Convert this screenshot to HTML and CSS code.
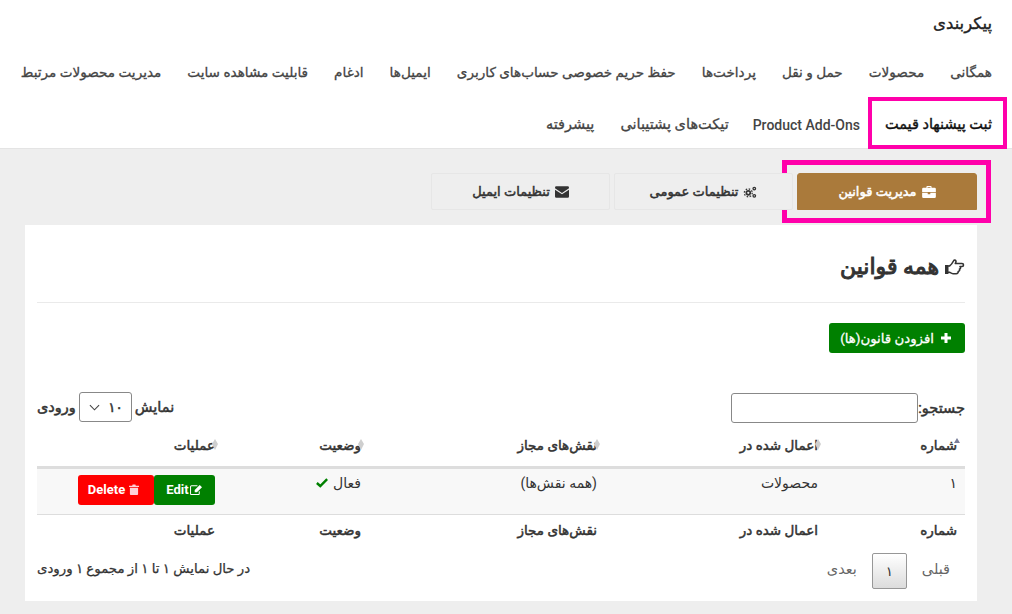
FILE: index.html
```html
<!DOCTYPE html>
<html lang="fa" dir="rtl">
<head>
<meta charset="utf-8">
<title>پیکربندی</title>
<link rel="stylesheet" href="styles.css">
</head>
<body>
<header class="top">
  <h1 class="page-title">پیکربندی</h1>
  <nav class="tabs">
    <a class="tab">همگانی</a>
    <a class="tab">محصولات</a>
    <a class="tab">حمل و نقل</a>
    <a class="tab">پرداخت‌ها</a>
    <a class="tab">حفظ حریم خصوصی حساب‌های کاربری</a>
    <a class="tab">ایمیل‌ها</a>
    <a class="tab">ادغام</a>
    <a class="tab">قابلیت مشاهده سایت</a>
    <a class="tab">مدیریت محصولات مرتبط</a>
    <a class="tab tab-active">ثبت پیشنهاد قیمت</a>
    <a class="tab tab-latin">Product Add-Ons</a>
    <a class="tab tab-wide">تیکت‌های پشتیبانی</a>
    <a class="tab tab-wide">پیشرفته</a>
  </nav>
</header>
<main class="content">
  <div class="subtabs">
    <a class="subtab subtab-active">
      <svg class="ic" viewBox="0 0 16 14"><path fill="currentColor" d="M5 2V1a1 1 0 0 1 1-1h4a1 1 0 0 1 1 1v1h3.500A1.500 1.500 0 0 1 16 3.500V7H0V3.500A1.500 1.500 0 0 1 1.500 2zm1.300 0h3.400V1.300H6.300zM0 8h6.500v1.500h3V8H16v4.500a1.500 1.500 0 0 1-1.500 1.500h-13A1.500 1.500 0 0 1 0 12.500z"/></svg>
      مدیریت قوانین
    </a>
    <a class="subtab">
      <svg class="ic" viewBox="0 0 16 14"><g fill="none" stroke="currentColor"><circle cx="6" cy="8" r="2.300" stroke-width="2"/><circle cx="6" cy="8" r="4.600" stroke-width="1.500" stroke-dasharray="1.800 1.800"/><circle cx="13" cy="3" r="1.500" stroke-width="1.500"/><circle cx="13" cy="11.500" r="1.500" stroke-width="1.500"/></g></svg>
      تنظیمات عمومی
    </a>
    <a class="subtab">
      <svg class="ic" viewBox="0 0 16 13"><path fill="currentColor" d="M1.500 0h13A1.500 1.500 0 0 1 16 1.500v.6L8 7.500 0 2.100v-.6A1.500 1.500 0 0 1 1.500 0zM0 3.800 8 9.200l8-5.400v7.700a1.500 1.500 0 0 1-1.500 1.500h-13A1.500 1.500 0 0 1 0 11.500z"/></svg>
      تنظیمات ایمیل
    </a>
  </div>
  <section class="card">
    <h2 class="card-title">
      <svg class="hand" viewBox="0 0 20 17"><path fill="none" stroke="currentColor" stroke-width="1.600" stroke-linejoin="round" d="M1 8h3.500c1.500-1 3-3 4-5 .7-1.400 2.500-1.200 2.500.5 0 .8-.3 1.300-.7 2H17c2 0 2 3 0 3h-2c1 1 .6 2.300-.5 2.600.5 1.200-.2 2.300-1.300 2.400.2 1.200-.6 2.200-2 2.200H8c-1.500 0-2.500-1-3.500-1.500H1z"/><rect x="0" y="7" width="3.500" height="9" fill="currentColor"/></svg>
      همه قوانین
    </h2>
    <div class="actions">
      <a class="btn-add"><svg class="plus" viewBox="0 0 10 10"><path fill="currentColor" d="M3.500 0h3v3.500H10v3H6.500V10h-3V6.500H0v-3h3.500z"/></svg>افزودن قانون(ها)</a>
    </div>
    <div class="table-controls">
      <label class="search">جستجو:<input class="search-input" type="text"></label>
      <label class="length">نمایش
        <span class="select"><span>۱۰</span><svg class="chev" viewBox="0 0 12 7"><path fill="none" stroke="#444" stroke-width="1.200" d="M1 1l5 5 5-5"/></svg></span>
        ورودی</label>
    </div>
    <table class="rules">
      <thead>
        <tr>
          <th class="col-id"><span class="sort sort-asc"></span>شماره</th>
          <th class="col-applied"><span class="sort"></span>اعمال شده در</th>
          <th class="col-roles"><span class="sort"></span>نقش‌های مجاز</th>
          <th class="col-status"><span class="sort"></span>وضعیت</th>
          <th class="col-ops"><span class="sort"></span>عملیات</th>
        </tr>
      </thead>
      <tbody>
        <tr>
          <td class="cell-id">۱</td>
          <td>محصولات</td>
          <td>(همه نقش‌ها)</td>
          <td>فعال <svg class="check" viewBox="0 0 14 11"><path fill="none" stroke="#008000" stroke-width="2.800" d="M1 5.500l4 3.500 8-8"/></svg></td>
          <td>
            <div class="ops">
              <a class="btn-op btn-edit">
                <svg class="op-ic" viewBox="0 0 14 12"><path fill="none" stroke="currentColor" stroke-width="1.100" d="M10 8v2.500a1 1 0 0 1-1 1H1.500a1 1 0 0 1-1-1V3a1 1 0 0 1 1-1H8"/><path fill="currentColor" d="M5 6.500 10.500 1 13 3.500 7.500 9H5z"/></svg>Edit</a><a class="btn-op btn-del">
                <svg class="op-ic trash" viewBox="0 0 11 12"><path fill="currentColor" d="M0 2h3.500l.5-1.500h3L7.500 2H11v1.200H0zM1 4h9v7a1 1 0 0 1-1 1H2a1 1 0 0 1-1-1z"/></svg>Delete</a>
            </div>
          </td>
        </tr>
      </tbody>
      <tfoot>
        <tr>
          <th class="cell-id">شماره</th>
          <th>اعمال شده در</th>
          <th>نقش‌های مجاز</th>
          <th>وضعیت</th>
          <th>عملیات</th>
        </tr>
      </tfoot>
    </table>
    <div class="table-footer">
      <div class="pager">
        <span class="pg">قبلی</span>
        <span class="pg-current">۱</span>
        <span class="pg">بعدی</span>
      </div>
      <div class="info">در حال نمایش ۱ تا ۱ از مجموع ۱ ورودی</div>
    </div>
  </section>
</main>
</body>
</html>
```
FILE: styles.css
```css
* { box-sizing: border-box; }
html, body { margin: 0; height: 100%; }
body {
  font-family: Roboto, "DejaVu Sans", sans-serif;
  font-size: 13.500px;
  color: #333;
  background: #eee;
  overflow: hidden;
}
.top { background: #fff; border-bottom: 1px solid #e4e4e4; height: 149px; padding: 0 20px; }
.page-title { margin: 0; padding-top: 14px; height: 46px; font-size: 16.500px; line-height: 20px; font-weight: 400; -webkit-text-stroke: .35px #222; color: #222; }
.tabs { display: flex; flex-wrap: wrap; column-gap: 26px; }
.tab { height: 53px; line-height: 52px; font-size: 13.600px; -webkit-text-stroke: .3px #444; color: #444; white-space: nowrap; }
.tab-latin { font-size: 14px; font-weight: 500; -webkit-text-stroke: 0; margin-right: -1px; margin-left: -2px; }
.tab-wide { font-size: 14.500px; }
.tab-active { position: relative; color: #111; font-size: 14.500px; -webkit-text-stroke: .4px #111; }
.tab-active::after { content: ""; position: absolute; top: -2px; bottom: 3px; left: -17px; right: -15px; border: 4px solid #ff00aa; }
.content { padding: 24px 35px 0 25px; }
.subtabs { display: flex; gap: 4px; height: 37px; }
.subtab { position: relative; width: 179px; display: flex; align-items: center; justify-content: center; gap: 5px; border: 1px solid #e6e6e6; border-radius: 2px; font-size: 13px; -webkit-text-stroke: .5px currentColor; color: #333; background: #eee; }
.subtab-active { width: 180px; background: #aa7a3b; border-color: #aa7a3b; border-radius: 3px 3px 0 0; color: #fff; }
.subtab-active::after { content: ""; position: absolute; inset: -14px -15px -14px -16px; border: 5px solid #ff00aa; }
.ic { width: 14px; height: 12px; flex: none; -webkit-text-stroke: 0; }
.card { margin-top: 15px; height: 376px; background: #fff; padding: 0 12px; }
.card-title { display: flex; align-items: center; gap: 6px; margin: 0; height: 78px; padding-top: 6px; border-bottom: 1px solid #eaeaea; font-size: 22px; font-weight: 400; -webkit-text-stroke: 1px #333; color: #333; }
.hand { width: 20px; height: 17px; flex: none; }
.actions { padding-top: 20px; height: 80px; }
.btn-add { display: inline-flex; align-items: center; gap: 7px; height: 30px; padding: 0 14px 0 11px; background: #008000; border-radius: 3px; color: #fff; font-size: 13.300px; -webkit-text-stroke: .3px #fff; }
.plus { width: 10px; height: 10px; }
.table-controls { display: flex; justify-content: space-between; align-items: flex-start; height: 40px; padding-top: 10px; font-size: 14.500px; -webkit-text-stroke: .5px #333; }
.search { display: flex; align-items: center; }
.search-input { width: 187px; height: 30px; border: 1px solid #888; border-radius: 3px; background: #fff; margin: 0; }
.length { display: flex; align-items: center; gap: 3px; margin-top: -1px; }
.select { display: flex; align-items: center; justify-content: space-between; width: 53px; height: 30px; padding: 0 8px 0 9px; border: 1px solid #888; border-radius: 3px; background: #fff; font-size: 13.500px; }
.chev { width: 11px; height: 7px; }
.rules { width: 100%; border-collapse: collapse; table-layout: fixed; }
.rules th, .rules td { text-align: right; padding: 0 5px; font-size: 13.500px; }
.rules th { font-weight: 400; color: #333; -webkit-text-stroke: .5px #333; }
.rules .cell-id, .rules .col-id { padding-right: 8px; }
.col-id { width: 142px; }
.col-applied { width: 221px; }
.col-roles { width: 236px; }
.col-status { width: 146px; }
.rules thead th { height: 44px; border-bottom: 3px solid #ddd; padding-bottom: 13px; vertical-align: bottom; position: relative; }
.rules tbody td { height: 47px; border-bottom: 1px solid #ddd; vertical-align: top; padding-top: 6px; font-size: 14px; background-color: #f9f9f9; background-image: conic-gradient(#f3f3f3 25%, #fcfcfc 0 50%, #f3f3f3 0 75%, #fcfcfc 0); background-size: 2px 2px; }
.rules tfoot th { height: 31px; }
.sort { position: absolute; right: 2px; top: 16px; width: 6px; height: 11px; background: #cfcfcf; clip-path: polygon(50% 0, 100% 45%, 50% 100%, 0 45%); }
.sort-asc { right: 5px; top: 15px; height: 5px; background: #7a7f9a; clip-path: polygon(50% 0, 100% 100%, 0 100%); }
.check { width: 12px; height: 10px; margin-right: 2px; }
.ops { display: flex; }
.btn-op { display: inline-flex; align-items: center; justify-content: center; gap: 1px; height: 30px; color: #fff; font-size: 13px; font-weight: 700; }
.btn-edit { width: 61px; background: #008000; border-radius: 3px; }
.btn-del { width: 76px; padding-right: 5px; background: #f00; border-radius: 3px; }
.op-ic { width: 13px; height: 11px; }
.trash { width: 10px; color: #ffd0d8; margin-left: 3px; }
.table-footer { display: flex; justify-content: space-between; align-items: center; margin-top: 8px; }
.pager { display: flex; align-items: center; gap: 15px; padding-right: 15px; color: #666; font-size: 14.500px; }
.pg { padding-bottom: 4px; }
.pg-current { width: 35px; height: 36px; display: flex; align-items: center; justify-content: center; border: 1px solid #979797; border-radius: 2px; background: linear-gradient(#fff, #dcdcdc); color: #333; font-size: 13.500px; }
.info { padding-bottom: 6px; font-size: 13.300px; -webkit-text-stroke: .25px #333; color: #333; }
```
